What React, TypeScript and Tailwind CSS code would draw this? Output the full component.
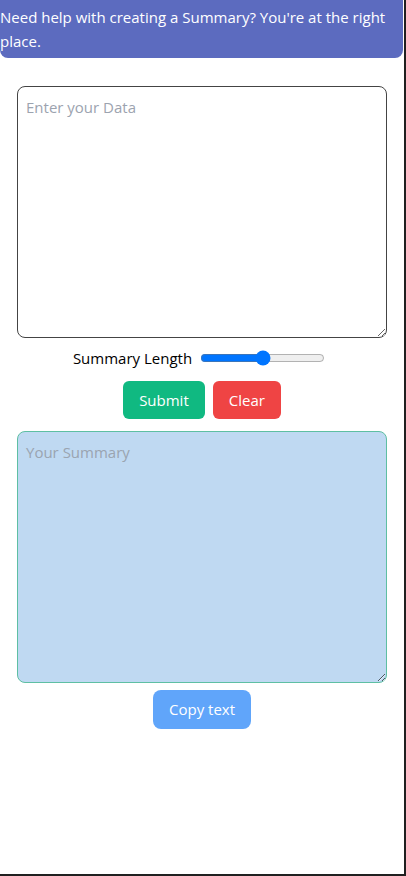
import { useState } from "react";

export default function App() {
  const [data, setData] = useState("");
  const [summary, setSummary] = useState("");
  const [length, setLength] = useState(50);

  return (
    <div
      className="w-[406px] h-[876px] bg-[#202020]"
      style={{ fontFamily: '"Segoe UI", "Open Sans", sans-serif' }}
    >
      <div className="w-[404px] h-[874px] bg-white flex flex-col items-center">
        {/* Header */}
        <div className="w-[403px] self-start bg-[#5c6bbf] rounded-b-lg py-[5px] text-white text-[15px] leading-6">
          Need help with creating a Summary? You're at the right place.
        </div>

        <textarea
          value={data}
          onChange={(e) => setData(e.target.value)}
          placeholder="Enter your Data"
          className="mt-[28px] w-[370px] h-[252px] border border-[#444] rounded-lg p-2 text-[15px] leading-6 text-gray-900 placeholder:text-[#9ca3af] outline-none"
        />

        <div className="mt-[8px] flex items-center gap-2 h-6 -ml-[6px]">
          <span className="text-[15px] text-black">Summary Length</span>
          <input
            type="range"
            min={0}
            max={100}
            value={length}
            onChange={(e) => setLength(Number(e.target.value))}
            className="w-[125px] accent-[#0075ff]"
          />
        </div>

        <div className="mt-[11px] flex gap-2">
          <button className="h-[38px] px-4 rounded-md bg-[#10b981] text-white text-[15px]">
            Submit
          </button>
          <button
            onClick={() => {
              setData("");
              setSummary("");
            }}
            className="h-[38px] px-4 rounded-md bg-[#ef4444] text-white text-[15px]"
          >
            Clear
          </button>
        </div>

        <textarea
          value={summary}
          onChange={(e) => setSummary(e.target.value)}
          placeholder="Your Summary"
          className="mt-[12px] w-[370px] h-[252px] border border-[#5ebfa3] bg-[#bfd9f2] rounded-lg p-2 text-[15px] leading-6 text-gray-900 placeholder:text-[#9aa4b0] outline-none"
        />

        <button className="mt-[7px] h-[39px] px-4 rounded-lg bg-[#60a5fa] text-white text-[15px]">
          Copy text
        </button>
      </div>
    </div>
  );
}
